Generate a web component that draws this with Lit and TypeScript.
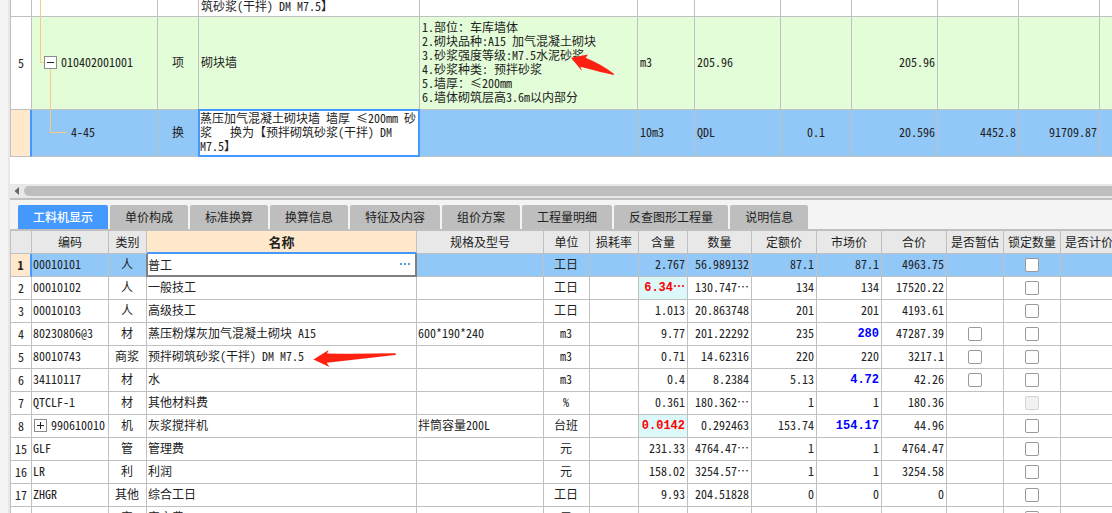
import { LitElement, html, css, svg, nothing } from "lit";
import { customElement, state } from "lit/decorators.js";

interface Resource {
  no: string;
  code: string;
  kind: string;
  name: string;
  spec?: string;
  unit: string;
  usage: string;
  usageEdited?: boolean;
  qty: string;
  base: string;
  market: string;
  marketEdited?: boolean;
  total: string;
  estimate?: boolean;
  locked?: boolean;
  expandable?: boolean;
}

const RESOURCES: Resource[] = [
  { no: "1", code: "00010101", kind: "人", name: "普工", unit: "工日", usage: "2.767", qty: "56.989132", base: "87.1", market: "87.1", total: "4963.75" },
  { no: "2", code: "00010102", kind: "人", name: "一般技工", unit: "工日", usage: "6.34⋯", usageEdited: true, qty: "130.747⋯", base: "134", market: "134", total: "17520.22" },
  { no: "3", code: "00010103", kind: "人", name: "高级技工", unit: "工日", usage: "1.013", qty: "20.863748", base: "201", market: "201", total: "4193.61" },
  { no: "4", code: "80230806@3", kind: "材", name: "蒸压粉煤灰加气混凝土砌块 A15", spec: "600*190*240", unit: "m3", usage: "9.77", qty: "201.22292", base: "235", market: "280", marketEdited: true, total: "47287.39", estimate: true },
  { no: "5", code: "80010743", kind: "商浆", name: "预拌砌筑砂浆(干拌) DM M7.5", unit: "m3", usage: "0.71", qty: "14.62316", base: "220", market: "220", total: "3217.1", estimate: true },
  { no: "6", code: "34110117", kind: "材", name: "水", unit: "m3", usage: "0.4", qty: "8.2384", base: "5.13", market: "4.72", marketEdited: true, total: "42.26", estimate: true },
  { no: "7", code: "QTCLF-1", kind: "材", name: "其他材料费", unit: "%", usage: "0.361", qty: "180.362⋯", base: "1", market: "1", total: "180.36", locked: true },
  { no: "8", code: "990610010", kind: "机", name: "灰浆搅拌机", spec: "拌筒容量200L", unit: "台班", usage: "0.0142", usageEdited: true, qty: "0.292463", base: "153.74", market: "154.17", marketEdited: true, total: "44.96", expandable: true },
  { no: "15", code: "GLF", kind: "管", name: "管理费", unit: "元", usage: "231.33", qty: "4764.47⋯", base: "1", market: "1", total: "4764.47" },
  { no: "16", code: "LR", kind: "利", name: "利润", unit: "元", usage: "158.02", qty: "3254.57⋯", base: "1", market: "1", total: "3254.58" },
  { no: "17", code: "ZHGR", kind: "其他", name: "综合工日", unit: "工日", usage: "9.93", qty: "204.51828", base: "0", market: "0", total: "0" },
  { no: "", code: "", kind: "安", name: "安文费", unit: "元", usage: "", qty: "", base: "", market: "", total: "" },
];

const HEADERS = ["编码", "类别", "名称", "规格及型号", "单位", "损耗率", "含量", "数量", "定额价", "市场价", "合价", "是否暂估", "锁定数量", "是否计价"];

const TABS = ["工料机显示", "单价构成", "标准换算", "换算信息", "特征及内容", "组价方案", "工程量明细", "反查图形工程量", "说明信息"];

const FEATURES = [
  "1.部位：车库墙体",
  "2.砌块品种:A15 加气混凝土砌块",
  "3.砂浆强度等级:M7.5水泥砂浆",
  "4.砂浆种类: 预拌砂浆",
  "5.墙厚：≤200mm",
  "6.墙体砌筑层高3.6m以内部分",
];

const toggleIcon = (plus: boolean) => html`
  <svg width="13" height="13" viewBox="0 0 13 13" shape-rendering="crispEdges" aria-hidden="true">
    <rect x="0.5" y="0.5" width="12" height="12" fill="#fff" stroke="#8c8c8c"></rect>
    <path d="M3 6.5H10" stroke="#222"></path>
    ${plus ? svg`<path d="M6.5 3V10" stroke="#222"></path>` : nothing}
  </svg>
`;

@customElement("app-root")
export class AppRoot extends LitElement {
  @state() private tab = 0;

  static styles = css`
    :host {
      display: flex;
      flex-direction: column;
      box-sizing: border-box;
      height: 100vh;
      overflow: hidden;
      position: relative;
      padding-left: 8px;
      background: #f4f4f4;
      color: #222;
      font: 12px/14px "Noto Sans CJK SC", sans-serif;
      font-feature-settings: "hwid" 1;
      text-spacing-trim: space-all;
      --line: #c0c0c0;
      --blue: #4499ff;
      --pick: #92c8f8;
      --peach: #ffe8cc;
    }
    button, input, textarea {
      font: inherit;
      color: inherit;
      font-feature-settings: inherit;
      margin: 0;
      padding: 0;
      border: 0;
      background: none;
      box-sizing: border-box;
    }
    svg { display: block; }
    .frame {
      flex: 1;
      min-height: 0;
      display: flex;
      flex-direction: column;
      border-left: 2px solid #e8e8e8;
      overflow: hidden;
    }
    table {
      table-layout: fixed;
      border-collapse: separate;
      border-spacing: 0;
      width: 100%;
    }
    td, th {
      box-sizing: border-box;
      padding: 0 2px;
      border-right: 1px solid var(--line);
      border-bottom: 1px solid var(--line);
      text-align: left;
      font-weight: 400;
      white-space: nowrap;
      overflow: hidden;
    }
    td { padding-bottom: 2px; }
    tr > :first-child {
      border-left: 1px solid var(--line);
      text-align: center;
      padding: 0;
    }
    td.mid, th.mid { text-align: center; }
    td.num { text-align: right; }
    tr.picked td { background: var(--pick); }
    tr > th.mark {
      background: var(--peach);
      border-right: 2px solid var(--blue);
      font-weight: 700;
    }

    /* bill of quantities */
    .bill {
      background: #fff;
      padding-bottom: 27px;
    }
    .bill td:last-child { border-right: 0; }
    .bill tr.prev > * { height: 17px; line-height: 12px; vertical-align: top; }
    .bill tr.item > * { height: 93px; }
    .bill tr.item td { background: #e2fdd7; }
    .bill tr.sub > * { height: 47px; }
    .bill td.node { position: relative; overflow: visible; }
    .bill td.edit {
      position: relative;
      overflow: visible;
    }
    .bill textarea {
      position: absolute;
      inset: -1px;
      width: calc(100% + 2px);
      height: calc(100% + 2px);
      border: 2px solid var(--blue);
      background: #fff;
      padding: 0;
      resize: none;
      overflow: hidden;
      outline: none;
    }
    .branch { display: flex; align-items: center; }
    .branch.one { padding-left: 10px; gap: 4px; }
    .branch.two { padding-left: 37px; }
    .wire {
      position: absolute;
      box-sizing: border-box;
      border: 0 solid #ffc880;
      border-left-width: 1px;
    }
    .wire.pass { left: 8px; top: 0; bottom: -1px; }
    .wire.in { left: 8px; top: 0; height: 50%; width: 4px; border-bottom-width: 1px; }
    .wire.out { left: 18px; top: calc(50% + 6px); bottom: -1px; }
    .wire.leaf { left: 18px; top: 0; height: 50%; width: 17px; border-bottom-width: 1px; }

    .scroll {
      display: flex;
      align-items: center;
      height: 14px;
      padding-left: 4px;
      gap: 4px;
      background: #e8e8e8;
      border-bottom: 2px solid var(--line);
    }
    .scroll button { width: 6px; height: 10px; }
    .thumb {
      flex: 1;
      height: 10px;
      border-radius: 5px 0 0 5px;
      background: #bebebe;
    }

    .tabs {
      display: flex;
      gap: 2px;
      padding: 5px 8px 0;
    }
    .tabs button {
      height: 24px;
      padding: 0 15px;
      border-radius: 2px 2px 0 0;
      background: #bebebe;
      white-space: nowrap;
    }
    .tabs button.on {
      background: var(--blue);
      color: #fff;
      font-weight: 500;
    }

    /* labour, material and machine list */
    .list {
      flex: 1;
      min-height: 0;
      overflow: hidden;
      background: #fff;
      border-top: 2px solid var(--line);
    }
    .list tr > * { height: 23px; line-height: 22px; }
    .list td { line-height: 20px; padding-left: 1px; }
    .list thead th { background: #e8e8e8; text-align: center; }
    .list thead th.focus {
      background: var(--peach);
      border-bottom: 2px solid var(--blue);
      font-size: 13px;
      line-height: 21px;
      font-weight: 700;
    }
    .list td.edit {
      padding: 0;
      background: #fff;
      position: relative;
      overflow: visible;
    }
    .combo {
      position: absolute;
      inset: 0 -1px -1px -1px;
      display: flex;
      border: 2px solid #808080;
      border-top: 0;
      background: #fff;
    }
    .combo input { flex: 1; min-width: 0; outline: none; }
    .combo button { width: 20px; display: grid; place-items: center; }
    .list td.edited {
      font: 700 12px/22px "Liberation Mono", "Noto Sans CJK SC", monospace;
      padding-bottom: 0;
    }
    .list td.usage { background: #dcf8f8; color: #f00; }
    .price { color: #00f; }
    .code { display: flex; align-items: center; gap: 4px; padding-left: 1px; }
    .list input[type="checkbox"] {
      appearance: none;
      display: block;
      width: 14px;
      height: 14px;
      margin: 0 auto;
      border: 1px solid #999;
      border-radius: 2px;
      background: #fff;
    }
    .list td.tick { padding: 0; }
    .list input[type="checkbox"]:checked { background: var(--blue); }
    .list input[type="checkbox"]:disabled { border-color: #d4d4d4; background: #f2f2f2; }

    .notes {
      position: absolute;
      left: 0;
      top: 0;
      pointer-events: none;
    }
  `;

  private renderBill() {
    const widths = [22, 126, 41, 221, 218, 57, 86, 71, 86, 81, 81];
    return html`
      <div class="bill">
        <table aria-label="分部分项清单">
          <colgroup>${widths.map((w) => html`<col width=${w} />`)}<col /></colgroup>
          <tbody>
            <tr class="prev">
              <th></th>
              <td class="node"><i class="wire pass"></i></td>
              <td></td>
              <td>筑砂浆(干拌) DM M7.5】</td>
              <td></td><td></td><td></td><td></td><td></td><td></td><td></td><td></td>
            </tr>
            <tr class="item">
              <th scope="row">5</th>
              <td class="node">
                <i class="wire in"></i><i class="wire out"></i>
                <div class="branch one">
                  <button aria-label="折叠">${toggleIcon(false)}</button>010402001001
                </div>
              </td>
              <td class="mid">项</td>
              <td>砌块墙</td>
              <td>${FEATURES.map((f) => html`<div>${f}</div>`)}</td>
              <td>m3</td>
              <td>205.96</td>
              <td></td>
              <td class="num">205.96</td>
              <td></td><td></td><td></td>
            </tr>
            <tr class="sub picked">
              <th class="mark"></th>
              <td class="node">
                <i class="wire leaf"></i>
                <div class="branch two">4-45</div>
              </td>
              <td class="mid">换</td>
              <td class="edit">
                <textarea aria-label="名称" spellcheck="false" .value=${"蒸压加气混凝土砌块墙 墙厚 ≤200mm 砂\n浆   换为【预拌砌筑砂浆(干拌) DM\nM7.5】"}></textarea>
              </td>
              <td></td>
              <td>10m3</td>
              <td>QDL</td>
              <td class="mid">0.1</td>
              <td class="num">20.596</td>
              <td class="num">4452.8</td>
              <td class="num">91709.87</td>
              <td></td>
            </tr>
          </tbody>
        </table>
      </div>
    `;
  }

  private renderRow(r: Resource, i: number) {
    const picked = i === 0;
    return html`
      <tr class=${picked ? "picked" : ""}>
        <th scope="row" class=${picked ? "mark" : ""}>${r.no}</th>
        <td>
          ${r.expandable
            ? html`<div class="code"><button aria-label="展开">${toggleIcon(true)}</button>${r.code}</div>`
            : r.code}
        </td>
        <td class="mid">${r.kind}</td>
        ${picked
          ? html`<td class="edit">
              <div class="combo">
                <input aria-label="名称" .value=${r.name} />
                <button aria-label="选择">
                  <svg width="11" height="3" viewBox="0 0 11 3" fill="#5a9fd0" shape-rendering="crispEdges">
                    <path d="M0 0h2v2H0zM4 0h2v2H4zM8 0h2v2H8z"></path>
                  </svg>
                </button>
              </div>
            </td>`
          : html`<td>${r.name}</td>`}
        <td>${r.spec ?? ""}</td>
        <td class="mid">${r.unit}</td>
        <td></td>
        <td class="num ${r.usageEdited ? "edited usage" : ""}">${r.usage}</td>
        <td class="num">${r.qty}</td>
        <td class="num">${r.base}</td>
        <td class="num ${r.marketEdited ? "edited price" : ""}">${r.market}</td>
        <td class="num">${r.total}</td>
        <td class="tick">${r.estimate ? html`<input type="checkbox" aria-label="是否暂估" />` : nothing}</td>
        <td class="tick"><input type="checkbox" aria-label="锁定数量" ?disabled=${r.locked} /></td>
        <td></td>
      </tr>
    `;
  }

  render() {
    const widths = [22, 77, 38, 270, 127, 46, 49, 49, 64, 65, 65, 65, 57, 57, 57];
    return html`
      <div class="frame" lang="zh-CN">
        ${this.renderBill()}
        <div class="scroll">
          <button aria-label="向左滚动">
            <svg width="6" height="10" viewBox="0 0 6 10"><path d="M5 1v8L0.5 5z" fill="#66666e"></path></svg>
          </button>
          <div class="thumb"></div>
        </div>
        <div class="tabs" role="tablist">
          ${TABS.map(
            (t, i) => html`<button role="tab" aria-selected=${i === this.tab} class=${i === this.tab ? "on" : ""} @click=${() => (this.tab = i)}>${t}</button>`
          )}
        </div>
        <div class="list">
          <table aria-label="工料机显示">
            <colgroup>${widths.map((w) => html`<col width=${w} />`)}</colgroup>
            <thead>
              <tr>
                <th></th>
                ${HEADERS.map((h) => html`<th scope="col" class=${h === "名称" ? "focus" : ""}>${h}</th>`)}
              </tr>
            </thead>
            <tbody>${RESOURCES.map((r, i) => this.renderRow(r, i))}</tbody>
          </table>
        </div>
      </div>
      <svg class="notes" width="620" height="380" viewBox="0 0 620 380" fill="#ff2010" aria-hidden="true">
        <path d="M571 57.7L588 54.6L585.5 57.8Q601 64 614.2 74L613.5 75Q598 71.5 591 69.5L580.5 66.7L582 71Z"></path>
        <path d="M313.5 359.5L328.6 350L327 353.5Q360 354 395 353.2Q397.5 354 395 355Q360 359 326.7 362.8L329.3 367Z"></path>
      </svg>
    `;
  }
}
